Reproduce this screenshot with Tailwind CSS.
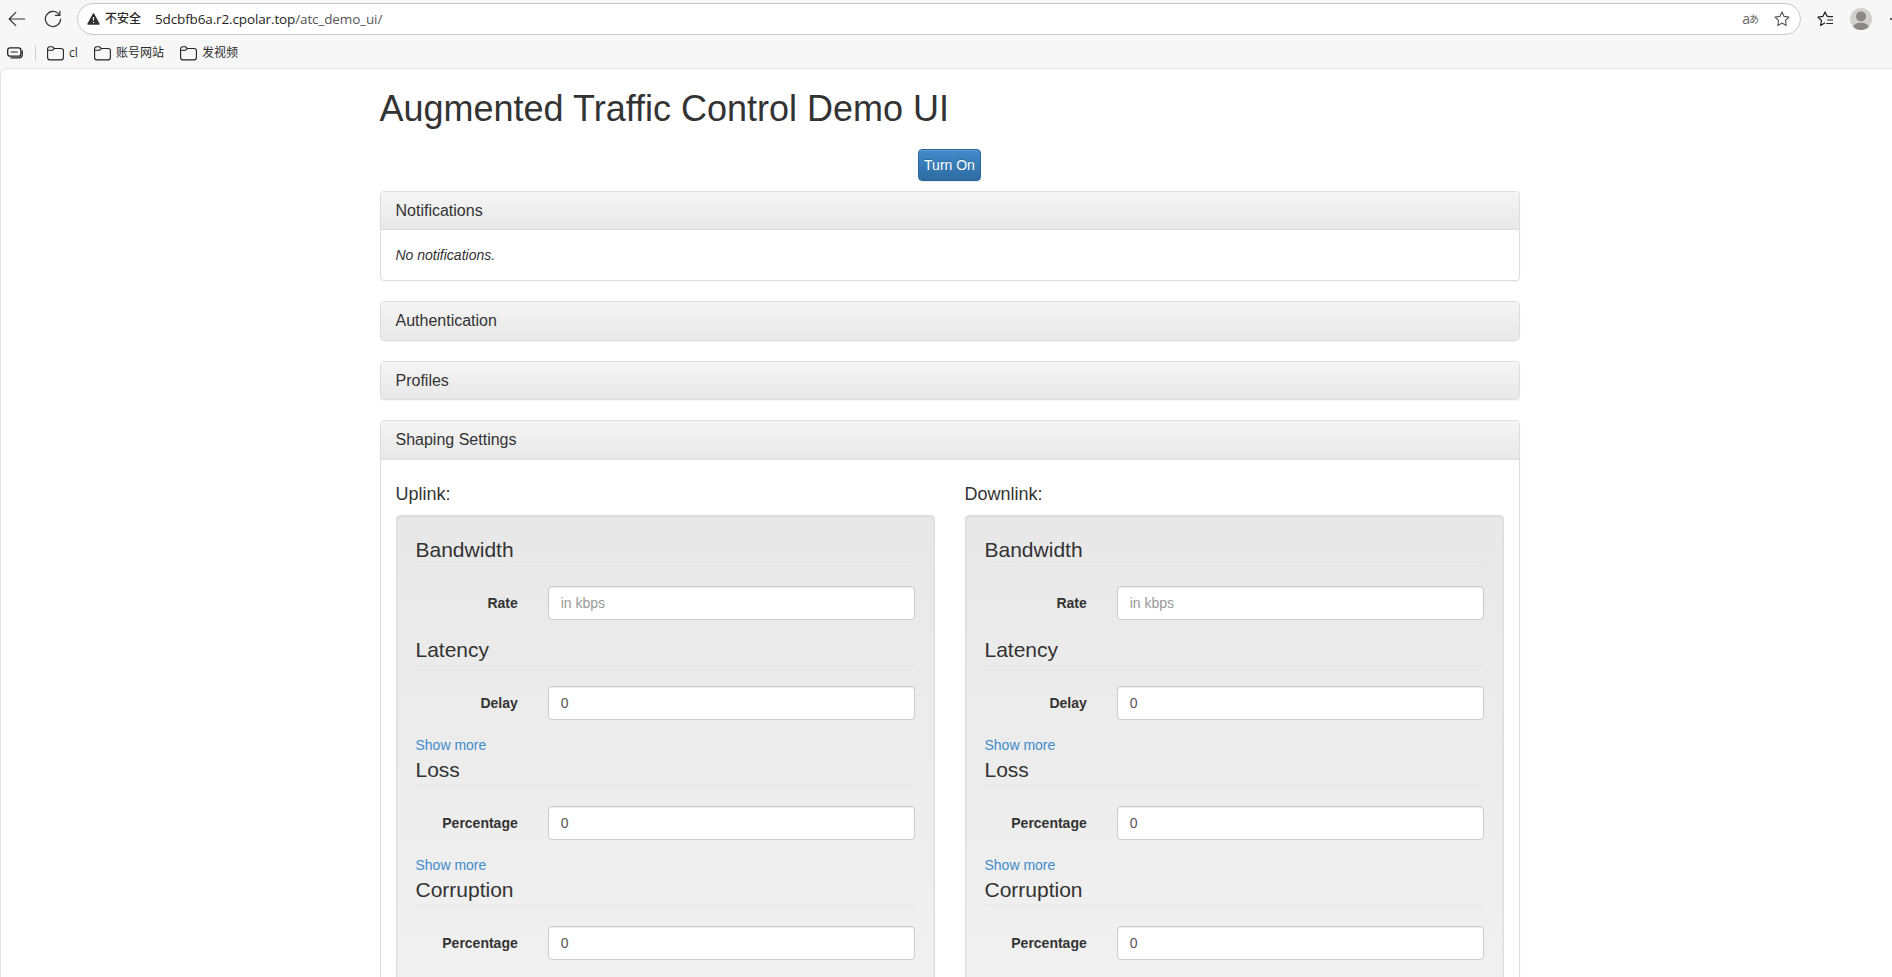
<!DOCTYPE html>
<html lang="zh-CN">
<head>
    <meta charset="UTF-8">
    <meta name="viewport" content="width=device-width, initial-scale=1.0">
    <title>Augmented Traffic Control Demo UI</title>
    <script src="https://cdn.jsdelivr.net/npm/@tailwindcss/browser@4"></script>
</head>
<body class="h-screen overflow-hidden flex flex-col bg-[#f7f7f7] font-['Liberation_Sans',Arial,sans-serif] text-sm leading-5 text-[#333]">
    <!-- 浏览器工具栏 -->
    <header class="shrink-0 h-[68px] font-['Open_Sans','Noto_Sans_CJK_SC',sans-serif] text-[#2b2b2b]">
        <div class="flex items-center h-[38px] pl-2">
            <svg class="w-[18px] h-[18px]" viewBox="0 0 18 18" fill="none" stroke="#333" stroke-width="1.2" stroke-linecap="round" stroke-linejoin="round">
                <path d="M16.5 9H1.2M7.8 2.4 1.2 9l6.6 6.6"/>
            </svg>
            <svg class="w-[18px] h-[18px] ml-[18px]" viewBox="0 0 18 18" fill="none" stroke="#333" stroke-width="1.2" stroke-linecap="round" stroke-linejoin="round">
                <path d="M16.6 9A7.6 7.6 0 1 1 14.8 4.1M15.9 1v4.4h-4.4"/>
            </svg>
            <div class="flex items-center h-8 w-[1724px] ml-[15px] pl-[9px] pr-[10px] bg-white border border-[#c8c8c8] rounded-full">
                <svg class="w-[13px] h-3" viewBox="0 0 13 12">
                    <path d="M6.5.9 12 11H1z" fill="#333" stroke="#333" stroke-width="1.4" stroke-linejoin="round"/>
                    <path d="M6.5 4v3.6M6.5 8.9v1.2" stroke="#fff" stroke-width="1.1"/>
                </svg>
                <span class="ml-[5px] text-xs font-medium">不安全</span>
                <span class="ml-[14px] w-[228px] text-[13.5px] tracking-[-0.13px] whitespace-nowrap text-[#1f1f1f]">5dcbfb6a.r2.cpolar.top<span class="text-[#555]">/atc_demo_ui/</span></span>
                <span class="flex items-center ml-auto text-[#666] text-sm leading-none whitespace-nowrap">a<span class="text-[10px] -ml-px">あ</span></span>
                <svg class="w-4 h-4 ml-[15px]" viewBox="0 0 16 16" fill="none" stroke="#555" stroke-width="1.1" stroke-linejoin="round">
                    <path d="m8 .9 2.1 4.5 4.9.7-3.6 3.4.9 5L8 12.1l-4.3 2.4.9-5L1 6.1l4.9-.7z"/>
                </svg>
            </div>
            <svg class="w-4 h-4 ml-4" viewBox="0 0 16 16" fill="none" stroke="#222" stroke-width="1.2" stroke-linecap="round" stroke-linejoin="round">
                <path d="M12.2 5.5 10 5.2 8 .9 5.9 5.4.9 6.1l3.6 3.4-.9 5L7.700 12M10.600 5.600h5M10.600 9h5M9.800 12.500h5.800"/>
            </svg>
            <svg class="w-[22px] h-[22px] ml-[17px]" viewBox="0 0 22 22">
                <circle cx="11" cy="11" r="11" fill="#d2d0ce"/>
                <circle cx="11" cy="8.4" r="5" fill="#8a8886"/>
                <path d="M3.2 18.7C4 16 7 14.8 11 14.8s7 1.2 7.8 3.9A11 11 0 0 1 11 22a11 11 0 0 1-7.8-3.3z" fill="#8a8886"/>
            </svg>
            <span class="ml-[18px] w-[2px] h-[2px] shrink-0 bg-[#222] rounded-full"></span>
        </div>
        <!-- 收藏夹栏 -->
        <div class="flex items-center h-[30px] pl-[7px] text-xs">
            <svg class="w-4 h-3" viewBox="0 0 16 12" fill="none" stroke="#222" stroke-linejoin="round" stroke-linecap="round">
                <rect x=".7" y=".9" width="13.2" height="8.2" rx="2.2" stroke-width="1.3"/>
                <path d="M4.2 5h6M15.3 3.8v3.7a3.4 3.4 0 0 1-3.4 3.4H4" stroke-width="1.2"/>
            </svg>
            <span class="w-px h-4 ml-3 bg-[#d0d0d0]"></span>
            <svg class="w-[17px] h-[15px] ml-[11px]" viewBox="0 0 17 15" fill="none" stroke="#222" stroke-width="1.1" stroke-linejoin="round">
                <path d="M.6 3C.6 1.6 1.4.7 2.8.7h2.5L7.400 2.500h6.700c1.400 0 2.300.9 2.300 2.300v6.800c0 1.400-.9 2.300-2.300 2.300H2.900C1.500 13.900.6 13 .6 11.600zM.8 4.300h4.500L7.400 2.500"/>
            </svg>
            <span class="ml-[5px] w-[10px]">cl</span>
            <svg class="w-[17px] h-[15px] ml-[15px]" viewBox="0 0 17 15" fill="none" stroke="#222" stroke-width="1.1" stroke-linejoin="round">
                <path d="M.6 3C.6 1.6 1.4.7 2.8.7h2.5L7.400 2.500h6.700c1.400 0 2.300.9 2.300 2.300v6.800c0 1.400-.9 2.300-2.300 2.300H2.900C1.500 13.900.6 13 .6 11.600zM.8 4.300h4.500L7.400 2.500"/>
            </svg>
            <span class="ml-[5px]">账号网站</span>
            <svg class="w-[17px] h-[15px] ml-4" viewBox="0 0 17 15" fill="none" stroke="#222" stroke-width="1.1" stroke-linejoin="round">
                <path d="M.6 3C.6 1.6 1.4.7 2.8.7h2.5L7.400 2.500h6.700c1.400 0 2.300.9 2.300 2.300v6.800c0 1.400-.9 2.300-2.300 2.300H2.900C1.500 13.900.6 13 .6 11.600zM.8 4.300h4.500L7.400 2.500"/>
            </svg>
            <span class="ml-[5px]">发视频</span>
        </div>
    </header>

    <!-- 页面内容 -->
    <main class="flex-1 overflow-hidden bg-white border-t border-l border-[#e4e4e4] rounded-tl-lg pl-[378.5px]">
        <div class="w-[1140px]">
            <h1 class="mt-5 mb-5 text-4xl leading-[39.6px] font-medium">Augmented Traffic Control Demo UI</h1>
            <div class="flex justify-center mb-[10px]">
                <button type="button" class="h-8 w-[63px] text-sm text-white rounded border border-[#2b669a] bg-linear-to-b from-[#428bca] to-[#2d6ca2] shadow-[inset_0_1px_0_rgba(255,255,255,0.15),0_1px_1px_rgba(0,0,0,0.075)] [text-shadow:0_-1px_0_rgba(0,0,0,0.2)]">Turn On</button>
            </div>

            <section class="mb-5 border border-[#ddd] rounded shadow-[0_1px_2px_rgba(0,0,0,0.05)]">
                <h4 class="px-[15px] py-[10px] text-base leading-[17.6px] rounded-t-[3px] border-b border-[#ddd] bg-linear-to-b from-[#f5f5f5] to-[#e8e8e8]">Notifications</h4>
                <div class="p-[15px] italic">No notifications.</div>
            </section>
            <section class="mb-5 border border-[#ddd] rounded shadow-[0_1px_2px_rgba(0,0,0,0.05)]">
                <h4 class="px-[15px] py-[10px] text-base leading-[17.6px] rounded-[3px] bg-linear-to-b from-[#f5f5f5] to-[#e8e8e8]">Authentication</h4>
            </section>
            <section class="mb-5 border border-[#ddd] rounded shadow-[0_1px_2px_rgba(0,0,0,0.05)]">
                <h4 class="px-[15px] py-[10px] text-base leading-[17.6px] rounded-[3px] bg-linear-to-b from-[#f5f5f5] to-[#e8e8e8]">Profiles</h4>
            </section>

            <section class="border border-[#ddd] rounded shadow-[0_1px_2px_rgba(0,0,0,0.05)]">
                <h4 class="px-[15px] py-[10px] text-base leading-[17.6px] rounded-t-[3px] border-b border-[#ddd] bg-linear-to-b from-[#f5f5f5] to-[#e8e8e8]">Shaping Settings</h4>
                <div id="links" class="grid grid-cols-2 gap-[30px] p-[15px]"></div>
            </section>
        </div>
    </main>

    <script>
        const groups = [
            { title: 'Bandwidth', label: 'Rate', placeholder: 'in kbps', value: '', more: false },
            { title: 'Latency', label: 'Delay', placeholder: '', value: '0', more: true },
            { title: 'Loss', label: 'Percentage', placeholder: '', value: '0', more: true },
            { title: 'Corruption', label: 'Percentage', placeholder: '', value: '0', more: false }
        ];

        function renderGroup(g) {
            return `
                <fieldset>
                    <legend class="block w-full mb-5 text-[21px] leading-[30px] border-b border-[#e5e5e5]">${g.title}</legend>
                    <div class="flex mb-[15px]">
                        <label class="w-[102.25px] pt-[7px] text-right font-bold">${g.label}</label>
                        <input type="text" value="${g.value}" placeholder="${g.placeholder}" class="flex-1 min-w-0 ml-[30px] h-[34px] px-3 text-sm text-[#555] placeholder:text-[#999] bg-white border border-[#ccc] rounded shadow-[inset_0_1px_1px_rgba(0,0,0,0.075)]">
                    </div>
                    ${g.more ? '<a href="#" class="block w-fit text-[#428bca]">Show more</a>' : ''}
                </fieldset>`;
        }

        document.getElementById('links').innerHTML = ['Uplink:', 'Downlink:'].map(name => `
            <div>
                <h4 class="my-[10px] text-lg leading-[19.8px]">${name}</h4>
                <div class="min-h-[720px] p-[19px] border border-[#dcdcdc] rounded bg-linear-to-b from-[#e8e8e8] to-[#f5f5f5] shadow-[inset_0_1px_3px_rgba(0,0,0,0.05),0_1px_0_rgba(255,255,255,0.1)]">
                    ${groups.map(renderGroup).join('')}
                </div>
            </div>`).join('');
    </script>
</body>
</html>
